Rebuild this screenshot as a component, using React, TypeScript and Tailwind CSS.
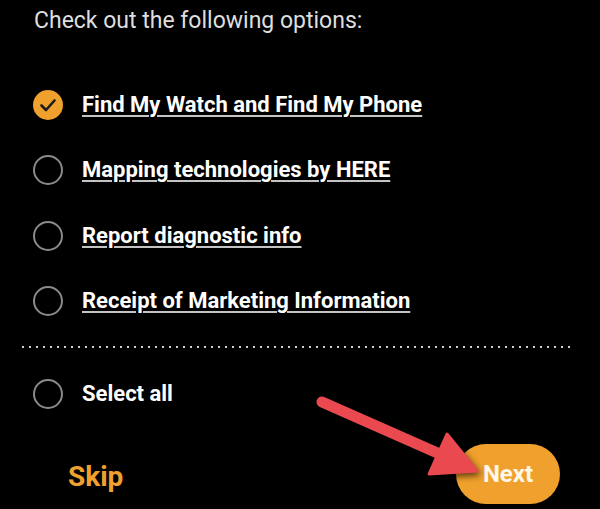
import { Fragment } from 'react'

const options = [
    { label: 'Find My Watch and Find My Phone', checked: true },
    { label: 'Mapping technologies by HERE', checked: false },
    { label: 'Report diagnostic info', checked: false },
    { label: 'Receipt of Marketing Information', checked: false },
]

function CheckedDot() {
    return (
        <svg width="30" height="30" viewBox="0 0 30 30" className="shrink-0">
            <circle cx="15" cy="15" r="15" fill="#f0a02c" />
            <path d="M8.5 15.5 L13 20 L21.5 10.5" fill="none" stroke="#1c1c1c" strokeWidth="2.6" strokeLinecap="round" strokeLinejoin="round" />
        </svg>
    )
}

function EmptyDot() {
    return <div className="w-[30px] h-[30px] rounded-full border-2 border-[#8a8a8a] shrink-0" />
}

export default function App() {
    return (
        <div className="relative w-[600px] h-[509px] bg-black overflow-hidden font-['Roboto',sans-serif]">
            <p className="pt-[7px] pl-[34px] text-[23px] leading-[28px] text-[#dedede]">
                Check out the following options:
            </p>

            <div className="mt-[37px]">
                {options.map((opt) => (
                    <div key={opt.label} className="h-[65.5px] pl-[33px] flex items-center gap-[19px]">
                        {opt.checked ? <CheckedDot /> : <EmptyDot />}
                        <span className="text-[22px] leading-[30px] font-bold text-white underline decoration-2 decoration-[#c4c4c4] underline-offset-[3px]">
                            {opt.label}
                        </span>
                    </div>
                ))}
            </div>

            {/* dotted divider */}
            <div className="mt-[12px] ml-[22px] w-[548px] h-[2px] flex justify-between">
                {Array.from({ length: 79 }).map((_, i) => (
                    <Fragment key={i}>
                        <div className="w-[2px] h-[2px] bg-[#d0d0d0]" />
                    </Fragment>
                ))}
            </div>

            <div className="mt-[13px] h-[65px] pl-[33px] flex items-center gap-[19px]">
                <EmptyDot />
                <span className="text-[22px] leading-[30px] font-bold text-white">Select all</span>
            </div>

            <div className="mt-[18px] h-[60px] flex items-center justify-between pl-[68px] pr-[40px]">
                <button className="pt-[5px] text-[28px] leading-[32px] font-bold text-[#f0a02c]">Skip</button>
                <button className="w-[104px] h-[60px] rounded-full bg-[#f0a02c] text-[24px] font-bold text-[#fff7e8] flex items-center justify-center">
                    Next
                </button>
            </div>

            {/* red pointer arrow */}
            <svg className="absolute inset-0 pointer-events-none drop-shadow-[2px_3px_3px_rgba(0,0,0,0.6)]" width="600" height="509" viewBox="0 0 600 509">
                <line x1="322" y1="402" x2="442" y2="455" stroke="#ea4a4f" strokeWidth="11" strokeLinecap="round" />
                <polygon points="477,471 429,474 447,434" fill="#ea4a4f" stroke="#ea4a4f" strokeWidth="3" strokeLinejoin="round" />
            </svg>
        </div>
    )
}
